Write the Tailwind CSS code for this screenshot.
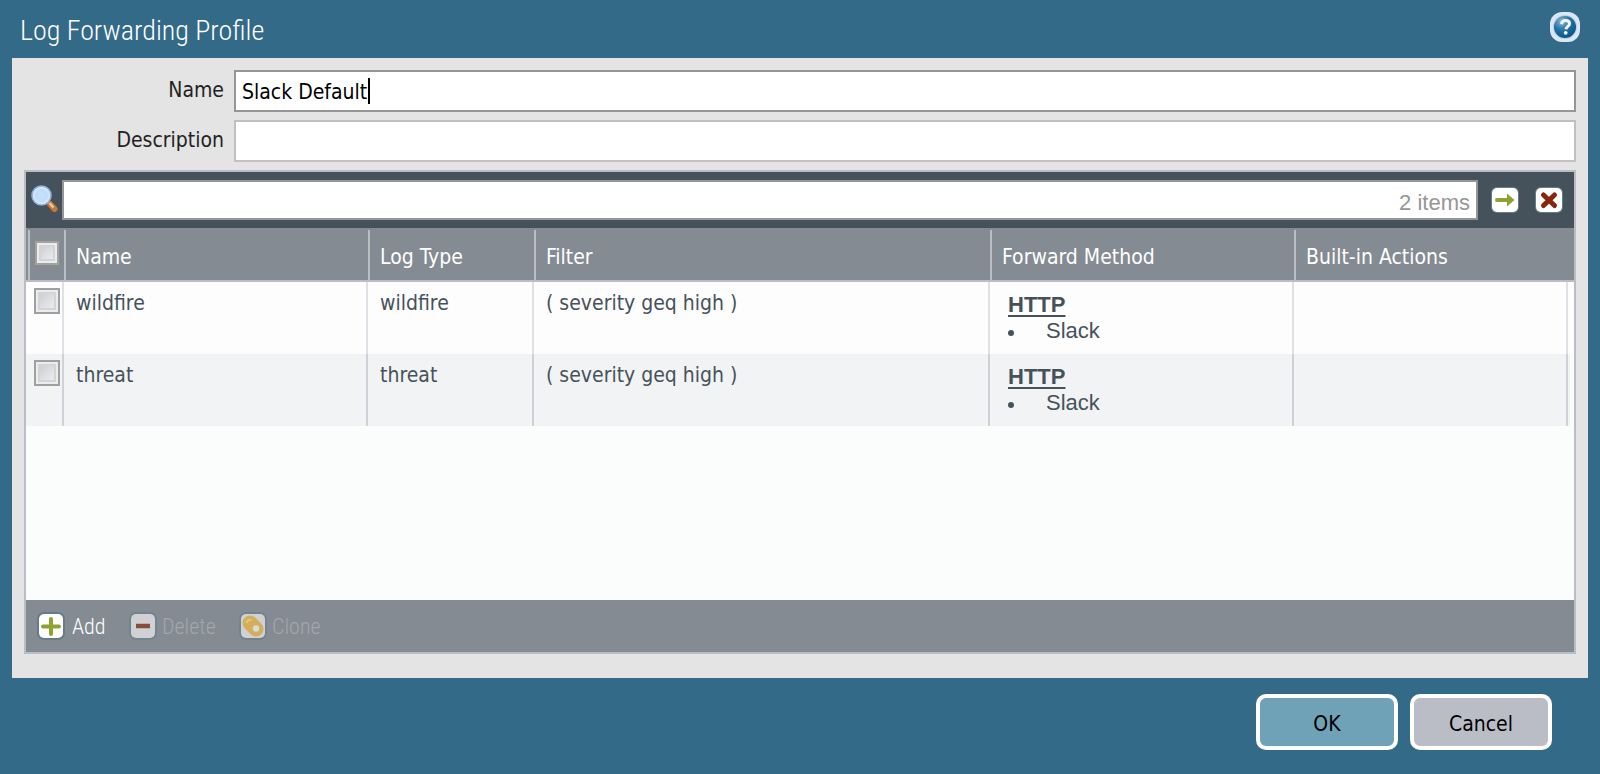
<!DOCTYPE html>
<html lang="en">
<head>
<meta charset="utf-8">
<meta name="viewport" content="width=device-width, initial-scale=1">
<title>Log Forwarding Profile</title>
<script src="https://cdn.jsdelivr.net/npm/@tailwindcss/browser@4"></script>
</head>
<body class="flex min-h-screen flex-col bg-[#336a88] px-3 pb-6 font-['DejaVu_Sans_Condensed','DejaVu_Sans',sans-serif] text-[21px] leading-7">
<header class="flex h-[58px] shrink-0 items-center justify-between pr-2 pl-2 font-['Roboto_Condensed',Roboto,sans-serif] text-white">
  <h1 class="pt-1 text-[28px] leading-9 font-light">Log Forwarding Profile</h1>
  <button type="button" aria-label="Help" class="mb-1">
    <svg class="size-[30px]" viewBox="0 0 30 30" aria-hidden="true">
      <defs><radialGradient id="orb" cx=".35" cy=".25" r=".75"><stop offset="0" stop-color="#8db9d6"/><stop offset=".5" stop-color="#2673a5"/><stop offset="1" stop-color="#0b5688"/></radialGradient></defs>
      <rect width="30" height="30" rx="12" fill="#dbe7f4"/>
      <circle cx="15" cy="15" r="12" fill="#b5cde0"/>
      <circle cx="15" cy="15" r="11" fill="url(#orb)"/>
      <path d="M11.5 12.2c.3-2.4 1.900-3.600 4.100-3.600 2.300 0 3.900 1.200 3.900 3.100 0 2.600-3.300 2.800-3.500 5.600" fill="none" stroke="#eef5fb" stroke-width="3"/>
      <circle cx="15.700" cy="20.800" r="1.900" fill="#eef5fb"/>
    </svg>
  </button>
</header>

<main class="flex grow flex-col bg-[#e4e4e4] px-3 pt-3 pb-6 text-[#222]">
  <div class="mb-2 flex items-center">
    <label for="name" class="w-[210px] shrink-0 pr-[10px] pb-[2px] text-right">Name</label>
    <div class="relative grow">
      <input id="name" type="text" value="Slack Default" class="block h-[42px] w-full border-2 border-[#969696] bg-white px-[6px] pt-[2px] text-black outline-none">
      <span class="absolute top-2 left-[134px] h-[26px] w-[2px] bg-black"></span>
    </div>
  </div>
  <div class="mb-2 flex items-center">
    <label for="description" class="w-[210px] shrink-0 pr-[10px] pb-[2px] text-right">Description</label>
    <input id="description" type="text" class="block h-[42px] min-w-0 grow border-2 border-[#c0c0c0] bg-white px-[6px] text-black outline-none">
  </div>

  <section class="flex grow flex-col border-2 border-[#b9bdc5] bg-[#fbfdfc]">
    <div class="flex h-14 shrink-0 items-center bg-[#46525b] pr-[10px] pl-[5px]">
      <svg class="mr-1 mb-1 size-[27px] shrink-0" viewBox="0 0 27 27" aria-hidden="true">
        <defs><radialGradient id="lens"><stop offset="0" stop-color="#c9e1f8"/><stop offset=".6" stop-color="#c2dcf6"/><stop offset="1" stop-color="#e0effc"/></radialGradient></defs>
        <path d="M19 19l4.500 5" stroke="#c57a31" stroke-width="6" stroke-linecap="round"/>
        <path d="M18.500 18l4 4.500" stroke="#f0c79b" stroke-width="2.500"/>
        <circle cx="10.500" cy="10.500" r="9.500" fill="url(#lens)" stroke="#8bb3e0" stroke-width="1.600"/>
      </svg>
      <div class="relative grow font-['Liberation_Sans',sans-serif]">
        <input type="text" aria-label="Search" class="block h-10 w-full border-2 border-[#969696] bg-white px-2 text-[22px] text-black outline-none">
        <span class="absolute top-[9px] right-2 text-[22px] leading-7 text-[#969696]">2 items</span>
      </div>
      <button type="button" aria-label="Apply filter" class="ml-3">
        <svg class="size-[30px]" viewBox="0 0 30 30" aria-hidden="true">
          <rect x="1" y="2" width="28" height="26" rx="6" fill="#657d8a"/><rect x="2" y="3" width="26" height="24" rx="5" fill="#fff"/>
          <path d="M7 15H19" stroke="#8ea332" stroke-width="4" stroke-linecap="round"/><path d="M17 8.500l7.500 6.500-7.500 6.500z" fill="#8ea332"/>
        </svg>
      </button>
      <button type="button" aria-label="Clear filter" class="ml-[14px]">
        <svg class="size-[30px]" viewBox="0 0 30 30" aria-hidden="true">
          <rect x="1" y="2" width="28" height="26" rx="6" fill="#657d8a"/><rect x="2" y="3" width="26" height="24" rx="5" fill="#fff"/>
          <path d="M9.500 10l11 10.500M20.500 10l-11 10.500" stroke="#85260f" stroke-width="5" stroke-linecap="round"/>
        </svg>
      </button>
    </div>

    <div class="bg-[#848b92] pt-[2px]">
      <table class="w-full table-fixed border-separate border-spacing-0 text-left">
        <colgroup><col class="w-[38px]"><col class="w-[304px]"><col class="w-[166px]"><col class="w-[456px]"><col class="w-[304px]"><col><col class="w-[6px]"></colgroup>
        <thead class="text-white">
          <tr>
            <th class="h-[52px] border-b-2 border-[#b9bdc5] p-0 pl-[2px] align-top"><div class="h-[50px] border-l-2 border-[#b9bdc5] pt-[11px] pl-[5px]"><input type="checkbox" aria-label="Select all" class="block size-6 appearance-none border-2 border-[#a3a29f] bg-linear-to-br from-[#c3c6cd] to-[#f6f6f6] shadow-[inset_0_0_0_2px_#ececec,inset_0_0_0_4px_#d3d4d8]"></div></th>
            <th class="border-b-2 border-l-2 border-[#b9bdc5] p-0 pt-[3px] pl-[10px] font-normal">Name</th>
            <th class="border-b-2 border-l-2 border-[#b9bdc5] p-0 pt-[3px] pl-[10px] font-normal">Log Type</th>
            <th class="border-b-2 border-l-2 border-[#b9bdc5] p-0 pt-[3px] pl-[10px] font-normal">Filter</th>
            <th class="border-b-2 border-l-2 border-[#b9bdc5] p-0 pt-[3px] pl-[10px] font-normal">Forward Method</th>
            <th class="border-b-2 border-l-2 border-[#b9bdc5] p-0 pt-[3px] pl-[10px] font-normal">Built-in Actions</th>
            <td class="border-b-2 border-[#b9bdc5] p-0"></td>
          </tr>
        </thead>
        <tbody class="text-[#46525b]">
          <tr class="bg-[#fdfdfd] align-top">
            <td class="h-[72px] border-r-2 border-[#dee2e7] p-0 pt-[6px] pl-2"><input type="checkbox" aria-label="Select wildfire" class="block size-[26px] appearance-none border-2 border-[#a0a0a0] bg-linear-to-br from-[#c3c6cd] to-[#f6f6f6] shadow-[inset_0_0_0_2px_#ececec,inset_0_0_0_4px_#d3d4d8]"></td>
            <td class="border-r-2 border-[#dee2e7] p-0 pt-[7px] pl-3">wildfire</td>
            <td class="border-r-2 border-[#dee2e7] p-0 pt-[7px] pl-3">wildfire</td>
            <td class="border-r-2 border-[#dee2e7] p-0 pt-[7px] pl-3">( severity geq high )</td>
            <td class="border-r-2 border-[#dee2e7] p-0 pt-[10px] pl-[18px] font-['Liberation_Sans',sans-serif] text-[22px] leading-[26px]">
              <b class="block underline decoration-2 underline-offset-3">HTTP</b>
              <ul><li class="flex items-center gap-8"><span class="mt-1 size-[6px] rounded-full bg-[#46525b]"></span>Slack</li></ul>
            </td>
            <td class="border-r-2 border-[#dee2e7] p-0"></td>
            <td class="p-0"></td>
          </tr>
          <tr class="bg-[#f2f3f5] align-top">
            <td class="h-[72px] border-r-2 border-[#ccd2d8] p-0 pt-[6px] pl-2"><input type="checkbox" aria-label="Select threat" class="block size-[26px] appearance-none border-2 border-[#a0a0a0] bg-linear-to-br from-[#c3c6cd] to-[#f6f6f6] shadow-[inset_0_0_0_2px_#ececec,inset_0_0_0_4px_#d3d4d8]"></td>
            <td class="border-r-2 border-[#ccd2d8] p-0 pt-[7px] pl-3">threat</td>
            <td class="border-r-2 border-[#ccd2d8] p-0 pt-[7px] pl-3">threat</td>
            <td class="border-r-2 border-[#ccd2d8] p-0 pt-[7px] pl-3">( severity geq high )</td>
            <td class="border-r-2 border-[#ccd2d8] p-0 pt-[10px] pl-[18px] font-['Liberation_Sans',sans-serif] text-[22px] leading-[26px]">
              <b class="block underline decoration-2 underline-offset-3">HTTP</b>
              <ul><li class="flex items-center gap-8"><span class="mt-1 size-[6px] rounded-full bg-[#46525b]"></span>Slack</li></ul>
            </td>
            <td class="border-r-2 border-[#ccd2d8] p-0"></td>
            <td class="border-r-4 border-[#fbfdfc] p-0"></td>
          </tr>
        </tbody>
      </table>
    </div>

    <div class="mt-auto flex h-[52px] shrink-0 items-center gap-5 bg-[#848b92] pl-[10px] font-['Roboto_Condensed',Roboto,sans-serif] text-[22px] font-light text-white">
      <button type="button" class="flex w-[72px] items-center gap-[6px]">
        <svg class="size-[30px] shrink-0" viewBox="0 0 30 30" aria-hidden="true"><rect x="1" y="1" width="28" height="28" rx="7" fill="#667c89"/><rect x="3" y="3" width="24" height="24" rx="5" fill="#fff"/><path d="M15 8v15M7 15.500h16" stroke="#8ea332" stroke-width="4" stroke-linecap="round"/></svg>
        <span class="pt-[2px]">Add</span>
      </button>
      <button type="button" disabled class="flex w-[90px] items-center gap-1 text-[#a2a7ad]">
        <svg class="size-[30px] shrink-0" viewBox="0 0 30 30" aria-hidden="true"><rect x="1" y="1" width="28" height="28" rx="7" fill="#74848f"/><rect x="3" y="3" width="24" height="24" rx="5" fill="#cfd1d4"/><path d="M8 15h14" stroke="#864c3e" stroke-width="4.500"/></svg>
        <span class="pt-[2px]">Delete</span>
      </button>
      <button type="button" disabled class="flex items-center gap-1 text-[#a2a7ad]">
        <svg class="size-[30px] shrink-0" viewBox="0 0 30 30" aria-hidden="true"><rect x="1" y="1" width="28" height="28" rx="7" fill="#74848f"/><rect x="3" y="3" width="24" height="24" rx="5" fill="#cfd1d4"/><path d="M12 12l6 6" stroke="#d4ae58" stroke-width="15" stroke-linecap="round"/><path d="M8.500 12a4 4 0 0 1 5-3" fill="none" stroke="#dfc68d" stroke-width="2"/><circle cx="18" cy="17.500" r="3.200" fill="#dadada"/></svg>
        <span class="pt-[2px]">Clone</span>
      </button>
    </div>
  </section>
</main>

<footer class="flex shrink-0 justify-end gap-3 pt-4 pr-9 text-black">
  <button type="button" class="h-14 w-[142px] rounded-[10px] border-4 border-white bg-[#6fa1b7] pt-1">OK</button>
  <button type="button" class="h-14 w-[142px] rounded-[10px] border-4 border-white bg-[#babdc6] pt-1">Cancel</button>
</footer>
</body>
</html>
